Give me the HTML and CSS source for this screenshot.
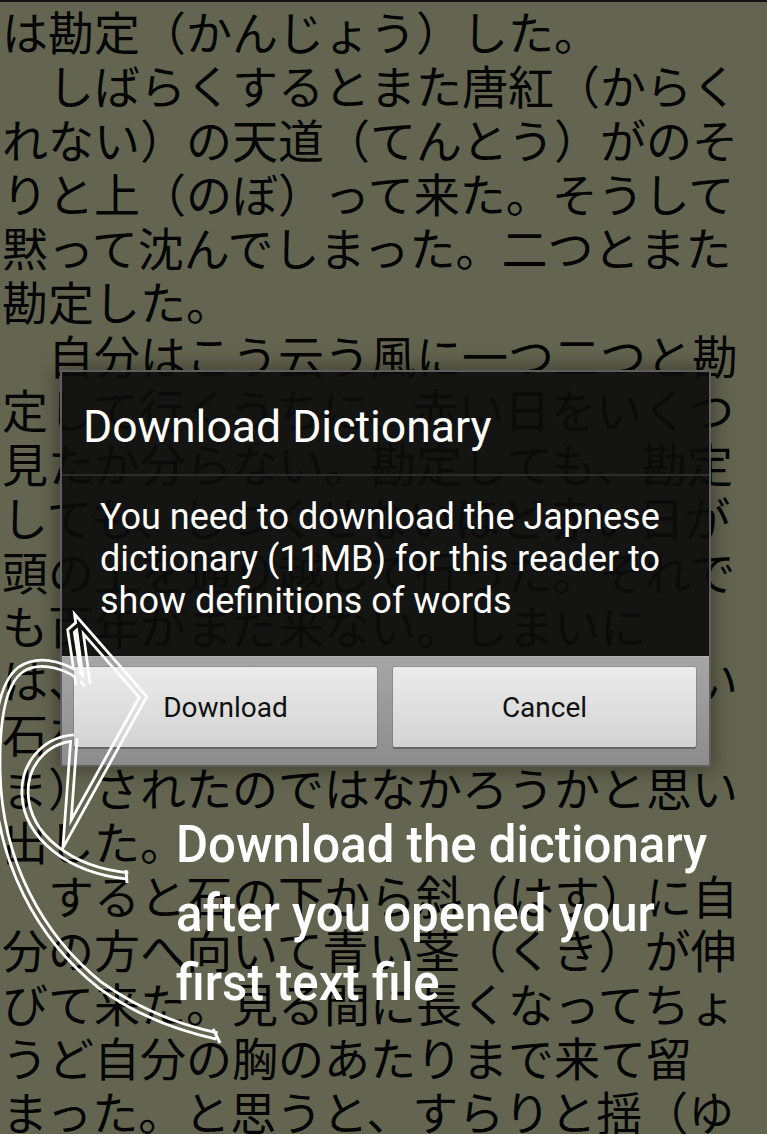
FILE: index.html
```html
<!DOCTYPE html>
<html lang="ja">
<head>
<meta charset="utf-8">
<title>Reader</title>
<link rel="stylesheet" href="styles.css">
</head>
<body>
<div class="screen">
  <div class="page">
    <div class="line">は勘定（かんじょう）した。</div>
    <div class="line">　しばらくするとまた唐紅（からく</div>
    <div class="line">れない）の天道（てんとう）がのそ</div>
    <div class="line">りと上（のぼ）って来た。そうして</div>
    <div class="line">黙って沈んでしまった。二つとまた</div>
    <div class="line">勘定した。</div>
    <div class="line">　自分はこう云う風に一つ二つと勘</div>
    <div class="line">定して行くうちに、赤い日をいくつ</div>
    <div class="line">見たか分らない。勘定しても、勘定</div>
    <div class="line">しても、しつくせないほど赤い日が</div>
    <div class="line">頭の上を通り越して行った。それで</div>
    <div class="line">も百年がまだ来ない。しまいに</div>
    <div class="line">は、苔（こけ）の生（は）えた丸い</div>
    <div class="line">石を眺めて、自分は女に欺（だ</div>
    <div class="line">ま）されたのではなかろうかと思い</div>
    <div class="line">出した。</div>
    <div class="line">　すると石の下から斜（はす）に自</div>
    <div class="line">分の方へ向いて青い茎（くき）が伸</div>
    <div class="line">びて来た。見る間に長くなってちょ</div>
    <div class="line">うど自分の胸のあたりまで来て留</div>
    <div class="line">まった。と思うと、すらりと揺（ゆ</div>
  </div>

  <div class="dialog">
    <div class="dialog-title">Download Dictionary</div>
    <div class="dialog-message">You need to download the Japnese<br>dictionary (11MB) for this reader to<br>show definitions of words</div>
    <div class="dialog-buttons">
      <button class="btn">Download</button>
      <button class="btn">Cancel</button>
    </div>
  </div>

  <div class="hint">
    <div class="hint-line">Download the dictionary</div>
    <div class="hint-line">after you opened your</div>
    <div class="hint-line">first text file</div>
  </div>

  <svg class="arrow" width="767" height="1134" viewBox="0 0 767 1134" aria-hidden="true">
    <defs>
      <g id="arrow-shape" fill="none" stroke-linejoin="miter" stroke-miterlimit="10">
        <path d="M 87 682 C 72 664, 40 654, 20 668 C 2 682, -4 720, -3 770 C -1 860, 40 935, 100 983 C 140 1012, 180 1026, 217 1034"/>
        <path d="M 74 736 C 45 738, 24 762, 25 792 C 27 835, 70 868, 128 874"/>
        <path d="M 87 682 L 79 622 L 143 695 L 67 832 L 74 736"/>
        <path d="M 79 622 L 71 629 L 79 682"/>
      </g>
      <mask id="arrow-mask" maskUnits="userSpaceOnUse" x="0" y="0" width="767" height="1134">
        <rect x="0" y="0" width="767" height="1134" fill="#fff"/>
        <use href="#arrow-shape" stroke="#000" stroke-width="3.5"/>
      </mask>
    </defs>
    <use href="#arrow-shape" stroke="#fff" stroke-width="9" mask="url(#arrow-mask)"/>
    <path d="M 213 1027 L 220 1041" stroke="#fff" stroke-width="3" fill="none"/>
    <path d="M 126 868 L 127 881" stroke="#fff" stroke-width="3" fill="none"/>
  </svg>
</div>
</body>
</html>
```

FILE: styles.css
```css
html, body {
  margin: 0;
  padding: 0;
  background: #646550;
}

.screen {
  position: relative;
  width: 767px;
  height: 1134px;
  overflow: hidden;
  background: #646550;
  border-top: 2px solid #151515;
  box-sizing: border-box;
}

.page {
  padding: 1px 0 0 2px;
  font-family: "Noto Sans CJK JP", "Noto Sans CJK SC", sans-serif;
  font-size: 46px;
  line-height: 54px;
  color: #050505;
  white-space: nowrap;
}

.dialog {
  position: absolute;
  left: 60px;
  top: 368px;
  width: 651px;
  box-sizing: border-box;
  border: 2px solid #5e5e5e;
  background: rgba(12, 12, 12, 0.91);
  box-shadow: 0 0 18px 4px rgba(0, 0, 0, 0.35);
  font-family: Roboto, "Noto Sans", sans-serif;
  display: flex;
  flex-direction: column;
}

.dialog-title {
  color: #fff;
  font-size: 44.5px;
  line-height: 53px;
  padding: 29px 0 20px 21px;
  border-bottom: 2px solid #2c2c2c;
}

.dialog-message {
  color: #fff;
  font-size: 36px;
  line-height: 42px;
  padding: 20px 0 34px 38px;
}

.dialog-buttons {
  display: flex;
  gap: 16px;
  padding: 10px 13px 18px 12px;
  background: linear-gradient(#a6a6a6, #8c8c8c);
  border-top: 1px solid #b4b4b4;
}

.btn {
  flex: 1;
  height: 80px;
  margin: 0;
  border: none;
  border-radius: 2px;
  background: linear-gradient(#ebebeb, #d3d3d3);
  box-shadow: 0 2px 0 #676767, 0 0 0 1px rgba(0, 0, 0, 0.12);
  font-family: Roboto, "Noto Sans", sans-serif;
  font-size: 28px;
  color: #111;
  padding: 0;
}

.hint {
  position: absolute;
  left: 176px;
  top: 808px;
  color: #fff;
  font-family: Roboto, "Noto Sans", sans-serif;
  font-weight: 500;
  font-size: 52px;
  line-height: 69px;
  white-space: nowrap;
  transform: scaleX(0.945);
  transform-origin: left top;
}

.arrow {
  position: absolute;
  left: 0;
  top: 0;
  pointer-events: none;
}
```
